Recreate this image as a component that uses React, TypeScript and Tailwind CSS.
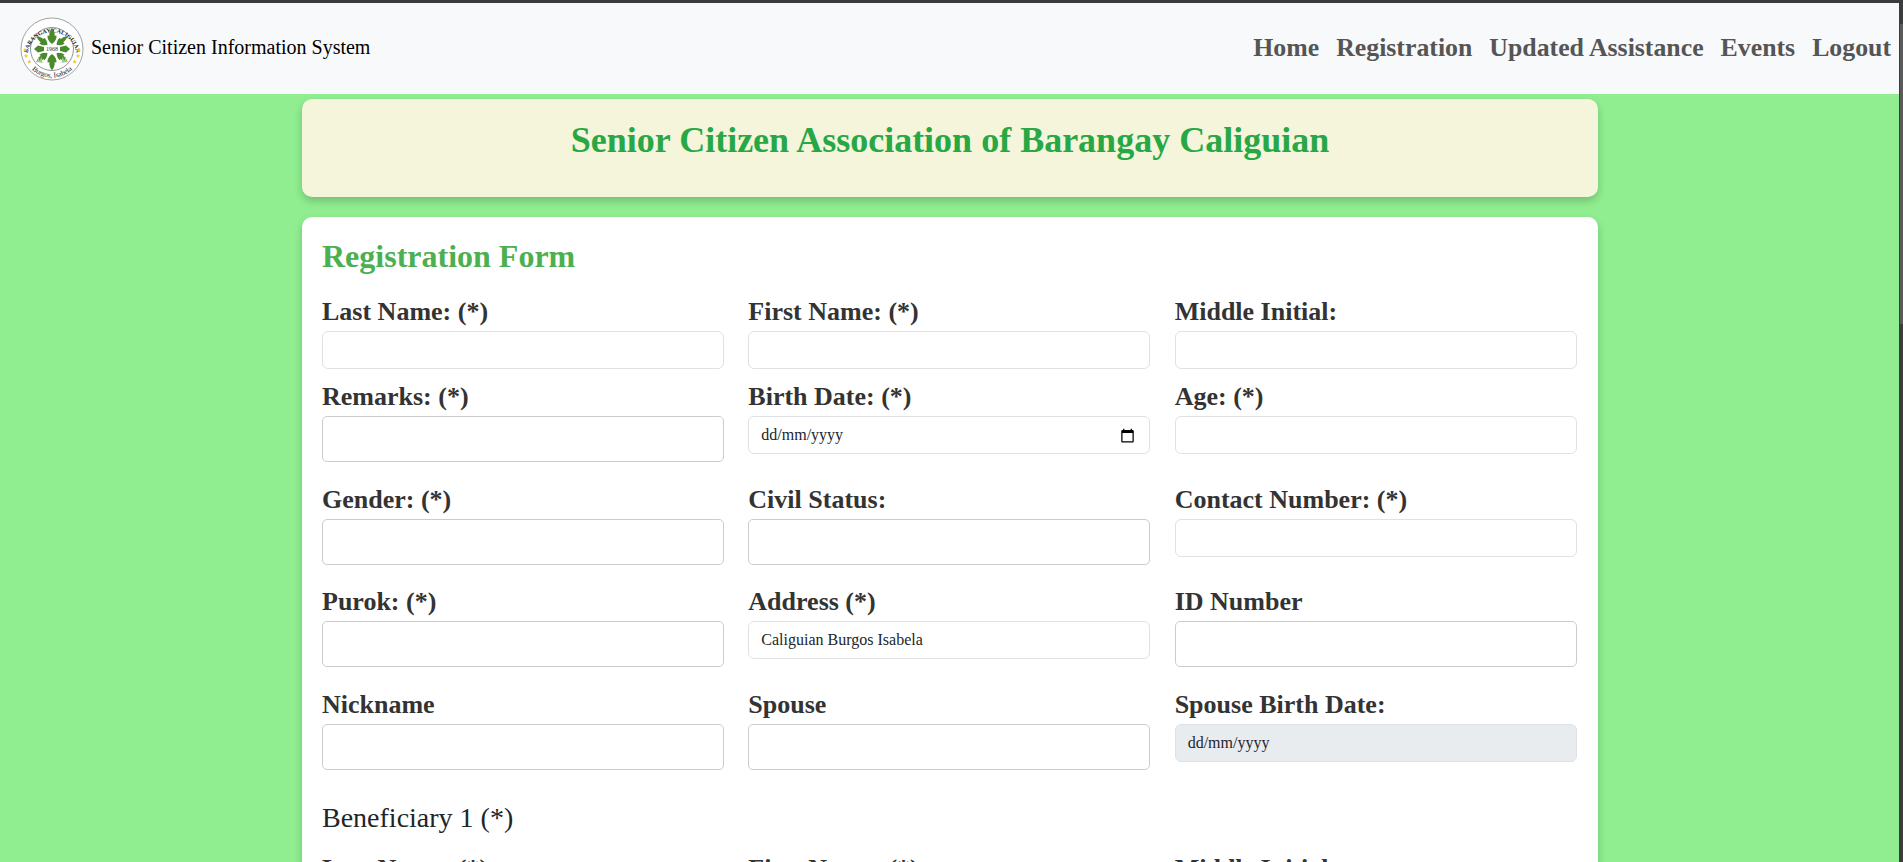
const serif = "font-['Liberation_Serif','Times_New_Roman',serif]";

const LEAF_LONG = "M32 27 C28.5 24.5 27 21 27.6 18.4 L29.4 18.8 C29 16 30 13.2 32 10.8 C34 13.2 35 16 34.6 18.8 L36.4 18.4 C37 21 35.5 24.5 32 27 Z";
const LEAF_DIAG = "M32 26 C29.5 24 28 21 28.4 18.6 L30 19 C29.8 16.4 30.6 13.8 32 11.6 C33.4 13.8 34.2 16.4 34 19 L35.6 18.6 C36 21 34.5 24 32 26 Z";

function Logo() {
  const stars: [number, number][] = [
    [5, 33], [6, 39], [9.3, 44.7],
    [59, 33], [58, 39], [54.7, 44.7],
  ];
  return (
    <svg width="64" height="64" viewBox="0 0 64 64" className="shrink-0">
      <circle cx="32" cy="32" r="31" fill="#fff" stroke="#8a8a8a" strokeWidth="0.8" />
      <circle cx="32" cy="32" r="21.5" fill="#fff" stroke="#777" strokeWidth="0.8" />
      <defs>
        <path id="logoTop" d="M 7.8 36 A 24.5 24.5 0 0 1 56.2 36" />
        <path id="logoBottom" d="M 3.5 37 A 29 29 0 0 0 60.5 37" />
      </defs>
      <text fontFamily="Liberation Serif" fontSize="5.9" fontWeight="700" fill="#222">
        <textPath href="#logoTop" startOffset="50%" textAnchor="middle">BARANGAY CALIGUIAN</textPath>
      </text>
      <text fontFamily="Liberation Serif" fontSize="7.2" fill="#222">
        <textPath href="#logoBottom" startOffset="50%" textAnchor="middle">Burgos, Isabela</textPath>
      </text>
      {[0, 180].map((a) => (
        <path key={a} d={LEAF_LONG} fill="#4a8a2c" transform={`rotate(${a} 32 32)`} />
      ))}
      {[50, 130, 230, 310].map((a) => (
        <path key={a} d={LEAF_DIAG} fill="#4a8a2c" transform={`rotate(${a} 32 32)`} />
      ))}
      <path d="M14 32 L18 28.5 L24 30 L24 34 L18 35.5 Z" fill="#4a8a2c" />
      <path d="M50 32 L46 28.5 L40 30 L40 34 L46 35.5 Z" fill="#4a8a2c" />
      <path d="M17 45 L18.6 39 L19.6 44 L21.5 39.5 L22.5 46 Z M41.5 46 L42.5 39.5 L44.4 44 L45.4 39 L47 45 Z" fill="#a5cc8a" />
      <rect x="24.5" y="28.5" width="15" height="7" fill="#fff" />
      <text x="32" y="34.2" textAnchor="middle" fontFamily="Liberation Serif" fontSize="6" fill="#333">1968</text>
      {stars.map(([x, y]) => (
        <path
          key={`${x}-${y}`}
          transform={`translate(${x} ${y})`}
          d="M0 -2.4 L0.6 -0.7 L2.3 -0.7 L1 0.3 L1.5 2 L0 1 L-1.5 2 L-1 0.3 L-2.3 -0.7 L-0.6 -0.7 Z"
          fill="#f7c72c"
        />
      ))}
    </svg>
  );
}

function CalendarIcon() {
  return (
    <svg width="15" height="15" viewBox="0 0 24 24" className="shrink-0">
      <path fill="#000" d="M20 3h-1V1h-2v2H7V1H5v2H4c-1.1 0-2 .9-2 2v16c0 1.1.9 2 2 2h16c1.1 0 2-.9 2-2V5c0-1.1-.9-2-2-2zm0 18H4V8h16v13z" />
    </svg>
  );
}

type FieldProps = {
  label: string;
  kind?: "small" | "large" | "date" | "disabledDate";
  value?: string;
};

function Field({ label, kind = "small", value }: FieldProps) {
  return (
    <div className="w-[402px]">
      <label className="block text-[26px] leading-[36px] font-bold text-[#333] mb-[1px]">{label}</label>
      {kind === "large" && (
        <input className="block w-full h-[46px] rounded-[5px] border border-[#ccc] bg-white outline-none" />
      )}
      {kind === "small" && (
        <input
          defaultValue={value}
          className="block w-full h-[38px] rounded-[6px] border border-[#dee2e6] bg-white px-[12px] text-[16px] text-[#212529] outline-none"
        />
      )}
      {kind === "date" && (
        <div className="flex items-center justify-between w-full h-[38px] rounded-[6px] border border-[#dee2e6] bg-white pl-[12px] pr-[14px] text-[16px] text-[#212529]">
          <span>dd/mm/yyyy</span>
          <CalendarIcon />
        </div>
      )}
      {kind === "disabledDate" && (
        <div className="flex items-center w-full h-[38px] rounded-[6px] border border-[#dee2e6] bg-[#e9ecef] pl-[12px] text-[16px] text-[#212529]">
          <span>dd/mm/yyyy</span>
        </div>
      )}
    </div>
  );
}

function Row({ children, h }: { children: React.ReactNode; h: string }) {
  return <div className={`flex gap-[24.33px] ${h}`}>{children}</div>;
}

export default function App() {
  return (
    <div className={`${serif} flex h-[862px] overflow-hidden bg-[#90ee90] border-t-[3px] border-[#3c3c3c]`}>
      <div className="w-[1899px] shrink-0">
        <nav className="flex items-center justify-between h-[91px] bg-[#f8f9fa] pl-[20px] pr-[8px]">
          <div className="flex items-center gap-[7px]">
            <Logo />
            <span className="text-[20px] text-black -mt-[4px]">Senior Citizen Information System</span>
          </div>
          <div className="flex items-center gap-[17px] text-[25.8px] font-bold text-[#555]">
            <span>Home</span>
            <span>Registration</span>
            <span>Updated Assistance</span>
            <span>Events</span>
            <span>Logout</span>
          </div>
        </nav>
        <main className="w-[1296px] ml-[302px] pt-[5px]">
          <header className="h-[98px] rounded-[10px] bg-[#f5f5dc] shadow-[0_4px_8px_rgba(0,0,0,0.2)] pt-[20px] text-center">
            <h1 className="text-[36px] leading-[43px] font-bold text-[#28a745]">Senior Citizen Association of Barangay Caliguian</h1>
          </header>
          <section className="mt-[20px] h-[700px] rounded-[10px] bg-white shadow-[0_4px_8px_rgba(0,0,0,0.2)] px-[20px] pt-[20px]">
            <h2 className="text-[32px] leading-[38px] font-bold text-[#4caf50] mb-[19px]">Registration Form</h2>
            <Row h="h-[85px]">
              <Field label="Last Name: (*)" />
              <Field label="First Name: (*)" />
              <Field label="Middle Initial:" />
            </Row>
            <Row h="h-[102.67px]">
              <Field label="Remarks: (*)" kind="large" />
              <Field label="Birth Date: (*)" kind="date" />
              <Field label="Age: (*)" />
            </Row>
            <Row h="h-[102.67px]">
              <Field label="Gender: (*)" kind="large" />
              <Field label="Civil Status:" kind="large" />
              <Field label="Contact Number: (*)" />
            </Row>
            <Row h="h-[102.67px]">
              <Field label="Purok: (*)" kind="large" />
              <Field label="Address (*)" value="Caliguian Burgos Isabela" />
              <Field label="ID Number" kind="large" />
            </Row>
            <Row h="h-[102.67px]">
              <Field label="Nickname" kind="large" />
              <Field label="Spouse" kind="large" />
              <Field label="Spouse Birth Date:" kind="disabledDate" />
            </Row>
            <h3 className="mt-[11px] text-[28px] leading-[34px] font-normal text-[#212529]">Beneficiary 1 (*)</h3>
            <div className="mt-[16px]">
              <Row h="h-[86px]">
                <Field label="Last Name: (*)" />
                <Field label="First Name: (*)" />
                <Field label="Middle Initial:" />
              </Row>
            </div>
          </section>
        </main>
      </div>
      <div className="w-[4px] shrink-0 bg-[#3c3c3c] pt-[21px] pl-[1px]">
        <div className="h-[300px] bg-[#5a5a5a]" />
      </div>
    </div>
  );
}
